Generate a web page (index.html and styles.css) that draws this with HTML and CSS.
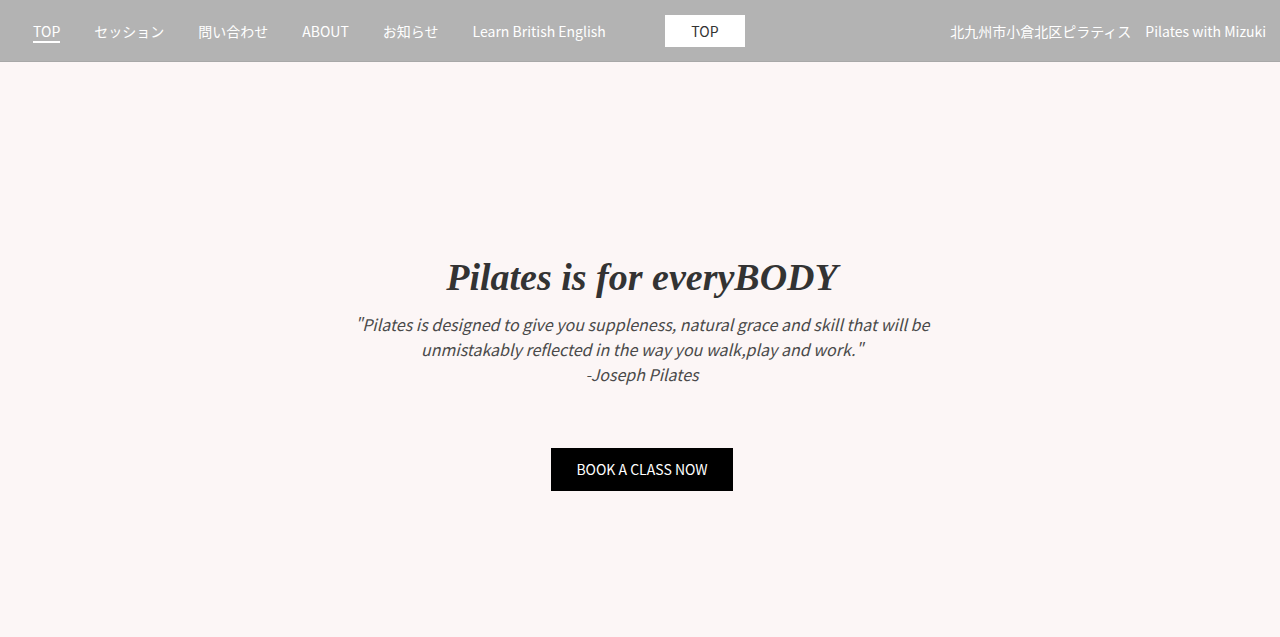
FILE: index.html
```html
<!DOCTYPE html>
<html lang="ja">
<head>
    <meta charset="UTF-8">
    <meta name="viewport" content="width=device-width, initial-scale=1.0">
    <title>Pilates with Mizuki</title>
    <link rel="stylesheet" href="styles.css">
</head>
<body>
    <div class="header">
        <ul class="nav">
            <li><a href="#" class="active">TOP</a></li>
            <li><a href="#">セッション</a></li>
            <li><a href="#">問い合わせ</a></li>
            <li><a href="#">ABOUT</a></li>
            <li><a href="#">お知らせ</a></li>
            <li><a href="#">Learn British English</a></li>
        </ul>
        <a href="#" class="top-btn">TOP</a>
        <div class="site-name">北九州市小倉北区ピラティス　Pilates with Mizuki</div>
    </div>
    <div class="hero">
        <h1>Pilates is for everyBODY</h1>
        <p class="quote">"Pilates is designed to give you suppleness, natural grace and skill that will be<br>unmistakably reflected in the way you walk,play and work."<br>-Joseph Pilates</p>
        <a href="#" class="book-btn">BOOK A CLASS NOW</a>
    </div>
</body>
</html>
```

FILE: styles.css
```css
body {
    margin: 0;
    font-family: "Noto Sans CJK JP", "Noto Sans", sans-serif;
    background-color: #fcf6f6;
    height: 637px;
    overflow: hidden;
}
a {
    text-decoration: none;
}
.header {
    display: flex;
    align-items: center;
    height: 61px;
    padding: 0 14px 0 33px;
    background-color: #b3b3b3;
    border-bottom: 1px solid #a8a8a8;
}
.nav {
    display: flex;
    gap: 34px;
    list-style: none;
    margin: 0;
    padding: 0;
}
.nav a {
    display: block;
    color: #fff;
    font-size: 14px;
    line-height: 20px;
    padding-top: 3px;
    border-bottom: 2px solid transparent;
}
.nav a.active {
    border-bottom-color: #fff;
}
.top-btn {
    display: block;
    width: 80px;
    height: 32px;
    line-height: 32px;
    margin-left: 59px;
    background: #fff;
    color: #333;
    font-size: 14px;
    text-align: center;
}
.site-name {
    margin-left: auto;
    color: #fff;
    font-size: 14px;
}
.hero {
    display: flex;
    flex-direction: column;
    align-items: center;
    padding-top: 193px;
    padding-left: 4px;
}
h1 {
    margin: 0;
    font-family: "Liberation Serif", serif;
    font-style: italic;
    font-weight: bold;
    font-size: 38px;
    line-height: 44px;
    color: #333;
}
.quote {
    margin: 13px 0 0;
    font-style: italic;
    font-size: 16px;
    line-height: 25px;
    color: #4a4a4a;
    text-align: center;
}
.book-btn {
    display: block;
    margin-top: 61px;
    padding: 0 25px;
    height: 43px;
    line-height: 43px;
    background: #000;
    color: #fff;
    font-size: 14px;
}
```
